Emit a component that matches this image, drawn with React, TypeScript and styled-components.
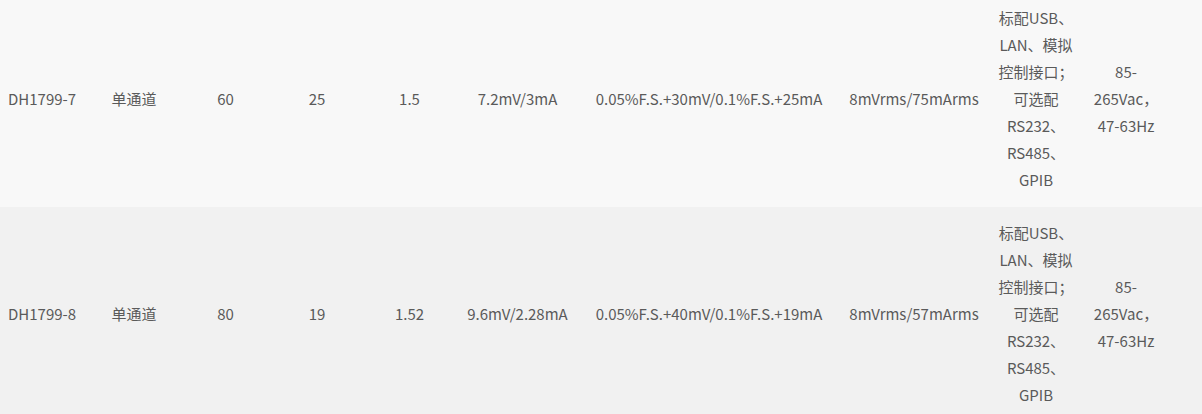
import React from 'react';
import styled, { createGlobalStyle } from 'styled-components';

const GlobalStyle = createGlobalStyle`
  html, body {
    margin: 0;
    padding: 0;
    background: #ffffff;
  }
  body {
    font-family: 'Noto Sans CJK SC', 'Noto Sans', sans-serif;
    overflow: hidden;
  }
`;

const Table = styled.div`
  width: 1202px;
  margin-top: -8px;
  color: #5a5a5a;
  font-size: 15px;
  line-height: 27px;
`;

const Row = styled.div<{ $shade: string }>`
  display: grid;
  grid-template-columns: 88px 92px 91px 92px 93px 123px 260px 150px 94px 86px;
  align-items: center;
  background: ${(p) => p.$shade};
  padding: 12px 0 14px;
`;

const Cell = styled.div<{ $left?: boolean }>`
  padding: 0 8px;
  text-align: ${(p) => (p.$left ? 'left' : 'center')};
  word-break: normal;
  overflow-wrap: break-word;
`;

type Spec = {
  model: string;
  channel: string;
  voltage: string;
  current: string;
  power: string;
  ripple: string;
  accuracy: string;
  noise: string;
};

const rows: Spec[] = [
  {
    model: 'DH1799-7',
    channel: '单通道',
    voltage: '60',
    current: '25',
    power: '1.5',
    ripple: '7.2mV/3mA',
    accuracy: '0.05%F.S.+30mV/0.1%F.S.+25mA',
    noise: '8mVrms/75mArms',
  },
  {
    model: 'DH1799-8',
    channel: '单通道',
    voltage: '80',
    current: '19',
    power: '1.52',
    ripple: '9.6mV/2.28mA',
    accuracy: '0.05%F.S.+40mV/0.1%F.S.+19mA',
    noise: '8mVrms/57mArms',
  },
];

const shades = ['#f8f8f8', '#f1f1f1'];

export default function App() {
  return (
    <>
      <GlobalStyle />
      <Table>
        {rows.map((r, i) => (
          <Row key={r.model} $shade={shades[i % 2]}>
            <Cell $left>{r.model}</Cell>
            <Cell>{r.channel}</Cell>
            <Cell>{r.voltage}</Cell>
            <Cell>{r.current}</Cell>
            <Cell>{r.power}</Cell>
            <Cell>{r.ripple}</Cell>
            <Cell>{r.accuracy}</Cell>
            <Cell>{r.noise}</Cell>
            <Cell>标配USB、LAN、模拟控制接口；可选配RS232、RS485、GPIB</Cell>
            <Cell>85-265Vac，47-63Hz</Cell>
          </Row>
        ))}
      </Table>
    </>
  );
}
